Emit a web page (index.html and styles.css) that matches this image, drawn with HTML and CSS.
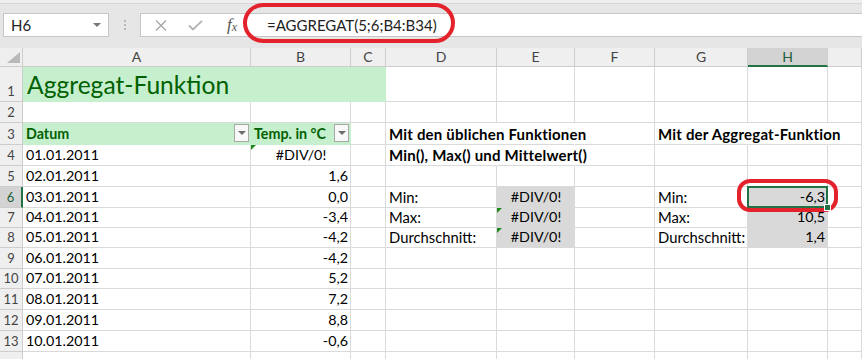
FILE: index.html
```html
<!DOCTYPE html>
<html lang="de">
<head>
  <meta charset="UTF-8" />
  <title>Aggregat-Funktion</title>
  <link rel="stylesheet" href="styles.css">
</head>
<body>
  <div class="toolbar">
    <div class="namebox">
      <span>H6</span>
      <span class="caret"></span>
    </div>
    <div class="grip">
      <svg width="4" height="12" viewBox="0 0 4 12"><circle cx="2" cy="2" r="1" fill="#a8a8a8"/><circle cx="2" cy="6" r="1" fill="#a8a8a8"/><circle cx="2" cy="10" r="1" fill="#a8a8a8"/></svg>
    </div>
    <div class="formula">
      <span class="fbtn">
        <svg width="12" height="11" viewBox="0 0 12 11"><path d="M1 0.5L11 10.5M11 0.5L1 10.5" stroke="#a6a6a6" stroke-width="1.3" fill="none"/></svg>
      </span>
      <span class="fbtn">
        <svg width="15" height="11" viewBox="0 0 15 11"><path d="M1 5.5L5 9.5L14 0.8" stroke="#b3b3b3" stroke-width="1.8" fill="none"/></svg>
      </span>
      <span class="fx"><i>f</i><sub>x</sub></span>
      <span class="ftext">=AGGREGAT(5;6;B4:B34)</span>
    </div>
  </div>

  <div class="sheet">
    <div class="cell ch corner">
      <svg width="22" height="18" viewBox="0 0 22 18"><polygon points="20,4 20,15 7,15" fill="#b9b9b9"/></svg>
    </div>
    <div class="cell ch">A</div>
    <div class="cell ch">B</div>
    <div class="cell ch">C</div>
    <div class="cell ch">D</div>
    <div class="cell ch">E</div>
    <div class="cell ch">F</div>
    <div class="cell ch">G</div>
    <div class="cell ch active">H</div>
    <div class="cell ch"></div>

    <div class="cell rh">1</div>
    <div class="cell good title">Aggregat-Funktion</div>
    <div class="cell"></div><div class="cell"></div><div class="cell"></div><div class="cell"></div><div class="cell"></div><div class="cell"></div>

    <div class="cell rh">2</div>
    <div class="cell"></div><div class="cell"></div><div class="cell"></div><div class="cell"></div><div class="cell"></div><div class="cell"></div><div class="cell"></div><div class="cell"></div><div class="cell"></div>

    <div class="cell rh">3</div>
    <div class="cell good b filterc"><span>Datum</span><span class="filter"></span></div>
    <div class="cell good b filterc"><span>Temp. in °C</span><span class="filter"></span></div>
    <div class="cell"></div>
    <div class="cell b hd ov">Mit den üblichen Funktionen</div>
    <div class="cell ov"></div>
    <div class="cell"></div>
    <div class="cell b hd ov">Mit der Aggregat-Funktion</div>
    <div class="cell ov"></div>
    <div class="cell"></div>

    <div class="cell rh">4</div>
    <div class="cell">01.01.2011</div>
    <div class="cell c err">#DIV/0!</div>
    <div class="cell"></div>
    <div class="cell b hd ov">Min(), Max() und Mittelwert()</div>
    <div class="cell ov"></div>
    <div class="cell"></div><div class="cell"></div><div class="cell"></div><div class="cell"></div>

    <div class="cell rh">5</div>
    <div class="cell">02.01.2011</div>
    <div class="cell r">1,6</div>
    <div class="cell"></div><div class="cell"></div><div class="cell"></div><div class="cell"></div><div class="cell"></div><div class="cell"></div><div class="cell"></div>

    <div class="cell rh active">6</div>
    <div class="cell">03.01.2011</div>
    <div class="cell r">0,0</div>
    <div class="cell"></div>
    <div class="cell lbl">Min:</div>
    <div class="cell gray c">#DIV/0!</div>
    <div class="cell"></div>
    <div class="cell lbl">Min:</div>
    <div class="cell gray r sel">-6,3</div>
    <div class="cell"></div>

    <div class="cell rh">7</div>
    <div class="cell">04.01.2011</div>
    <div class="cell r">-3,4</div>
    <div class="cell"></div>
    <div class="cell lbl">Max:</div>
    <div class="cell gray c err">#DIV/0!</div>
    <div class="cell"></div>
    <div class="cell lbl">Max:</div>
    <div class="cell gray r">10,5</div>
    <div class="cell"></div>

    <div class="cell rh">8</div>
    <div class="cell">05.01.2011</div>
    <div class="cell r">-4,2</div>
    <div class="cell"></div>
    <div class="cell lbl">Durchschnitt:</div>
    <div class="cell gray c err">#DIV/0!</div>
    <div class="cell"></div>
    <div class="cell lbl">Durchschnitt:</div>
    <div class="cell gray r">1,4</div>
    <div class="cell"></div>

    <div class="cell rh">9</div>
    <div class="cell">06.01.2011</div>
    <div class="cell r">-4,2</div>
    <div class="cell"></div><div class="cell"></div><div class="cell"></div><div class="cell"></div><div class="cell"></div><div class="cell"></div><div class="cell"></div>

    <div class="cell rh">10</div>
    <div class="cell">07.01.2011</div>
    <div class="cell r">5,2</div>
    <div class="cell"></div><div class="cell"></div><div class="cell"></div><div class="cell"></div><div class="cell"></div><div class="cell"></div><div class="cell"></div>

    <div class="cell rh">11</div>
    <div class="cell">08.01.2011</div>
    <div class="cell r">7,2</div>
    <div class="cell"></div><div class="cell"></div><div class="cell"></div><div class="cell"></div><div class="cell"></div><div class="cell"></div><div class="cell"></div>

    <div class="cell rh">12</div>
    <div class="cell">09.01.2011</div>
    <div class="cell r">8,8</div>
    <div class="cell"></div><div class="cell"></div><div class="cell"></div><div class="cell"></div><div class="cell"></div><div class="cell"></div><div class="cell"></div>

    <div class="cell rh">13</div>
    <div class="cell">10.01.2011</div>
    <div class="cell r">-0,6</div>
    <div class="cell"></div><div class="cell"></div><div class="cell"></div><div class="cell"></div><div class="cell"></div><div class="cell"></div><div class="cell"></div>

    <div class="cell rh"></div>
    <div class="cell"></div><div class="cell"></div><div class="cell"></div><div class="cell"></div><div class="cell"></div><div class="cell"></div><div class="cell"></div><div class="cell"></div><div class="cell"></div>
  </div>

  <div class="mark mark-formula"></div>
  <div class="mark mark-cell"></div>
</body>
</html>
```

FILE: styles.css
```css
body {
  margin: 0;
  width: 862px;
  height: 359px;
  overflow: hidden;
  position: relative;
  background: #fff;
  font-family: Lato, "Liberation Sans", sans-serif;
  color: #000;
}

/* formula bar */
.toolbar {
  height: 48px;
  box-sizing: border-box;
  display: flex;
  align-items: flex-start;
  padding: 13px 0 0 3px;
  background: #e6e6e6;
  box-shadow: inset 0 3px 0 #eeeeee, inset 0 4px 0 #d6d6d6;
}
.namebox {
  width: 106px;
  height: 24px;
  box-sizing: border-box;
  background: #fff;
  border: 1px solid #c6c6c6;
  display: flex;
  align-items: center;
  justify-content: space-between;
  padding: 0 7px 0 7px;
  font-size: 15px;
  color: #222;
}
.caret {
  width: 0;
  height: 0;
  border-left: 4px solid transparent;
  border-right: 4px solid transparent;
  border-top: 4px solid #777;
}
.grip {
  width: 31px;
  height: 24px;
  display: flex;
  align-items: center;
  justify-content: center;
}
.formula {
  flex: 1;
  height: 24px;
  box-sizing: border-box;
  background: #fff;
  border: 1px solid #c6c6c6;
  border-right: 0;
  display: flex;
  align-items: center;
  padding-left: 3px;
  font-size: 15px;
  color: #222;
}
.fbtn {
  width: 34px;
  display: flex;
  justify-content: center;
}
.fx {
  width: 40px;
  text-align: center;
  font-family: "Liberation Serif", serif;
  font-size: 17px;
  color: #555;
}
.fx sub {
  font-size: 12px;
  font-style: italic;
  vertical-align: -1px;
}
.ftext {
  margin-left: 15px;
}

/* sheet */
.sheet {
  display: grid;
  grid-template-columns: 23px 228px 100px 35px 111px 78px 80px 93px 80px 34px;
  grid-template-rows: 19px 35px 21px 22px 21px 21px 21px 20px 20px 21px 20px 21px 21px 21px 20px;
}
.cell {
  box-sizing: border-box;
  position: relative;
  min-width: 0;
  display: flex;
  align-items: flex-end;
  padding: 0 2px 2px 3px;
  border-right: 1px solid #dadada;
  border-bottom: 1px solid #dadada;
  font-size: 14.3px;
  line-height: 16px;
  white-space: nowrap;
}
.ch {
  background: #efefef;
  border-color: #cdcdcd;
  justify-content: center;
  align-items: center;
  padding: 0;
  color: #444;
  font-size: 14px;
}
.corner {
  align-items: flex-end;
  justify-content: flex-start;
}
.rh {
  background: #efefef;
  border-color: #cdcdcd;
  justify-content: center;
  padding: 0 0 2px;
  color: #444;
  font-size: 13px;
}
.ch.active {
  background: #d3d3d3;
  color: #1f5e3b;
  border-bottom: 2px solid #217346;
}
.rh.active {
  background: #d3d3d3;
  color: #1f5e3b;
  border-right: 2px solid #217346;
}
.good {
  background: #c6efce;
  border-color: #c6efce;
  color: #006100;
}
.title {
  grid-column: span 3;
  font-size: 24.6px;
  line-height: 28px;
  padding-left: 4px;
}
.gray {
  background: #d9d9d9;
  border-color: #d9d9d9;
}
.b {
  font-weight: bold;
}
.hd {
  font-size: 15px;
  letter-spacing: 0.2px;
}
.lbl {
  font-size: 14.8px;
}
.ov {
  border-right-color: transparent;
}
.r {
  justify-content: flex-end;
}
.c {
  justify-content: center;
}
.filterc {
  justify-content: space-between;
  padding-right: 1px;
}
.filter {
  align-self: center;
  width: 15px;
  height: 18px;
  box-sizing: border-box;
  border: 1px solid #a9a9a9;
  background: #f8f8f8;
  display: flex;
  align-items: center;
  justify-content: center;
}
.filter::after {
  content: "";
  border-left: 4px solid transparent;
  border-right: 4px solid transparent;
  border-top: 4px solid #6d6d6d;
}
.err::before {
  content: "";
  position: absolute;
  left: 0;
  top: 0;
  border-top: 5px solid #1e8a1e;
  border-right: 5px solid transparent;
}
.sel::after {
  content: "";
  position: absolute;
  left: -1px;
  top: -1px;
  right: -1px;
  bottom: -1px;
  border: 2px solid #217346;
}
.sel::before {
  content: "";
  position: absolute;
  right: -4px;
  bottom: -4px;
  width: 5px;
  height: 5px;
  background: #217346;
  border: 1px solid #fff;
  z-index: 1;
}

/* red highlight marks drawn over the screenshot */
.mark {
  position: absolute;
  box-sizing: border-box;
  border: 4px solid #e3222b;
}
.mark-formula {
  left: 243px;
  top: 3px;
  width: 212px;
  height: 40px;
  border-radius: 20px;
}
.mark-cell {
  left: 737px;
  top: 179px;
  width: 101px;
  height: 33px;
  border-radius: 13px;
}
```
